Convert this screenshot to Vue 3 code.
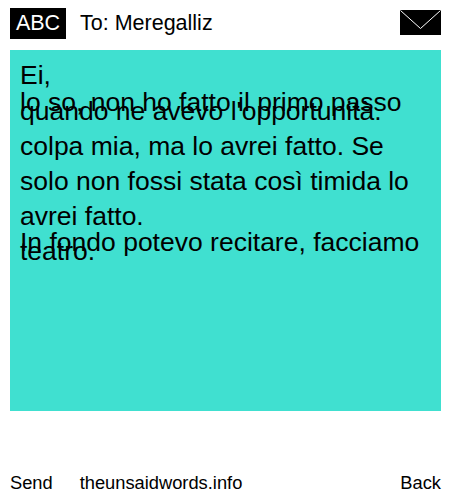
<script setup>
const recipient = 'Meregalliz'
</script>

<template>
  <div class="screen">
    <header class="top">
      <span class="mode">ABC</span>
      <span class="to">To: {{ recipient }}</span>
      <svg class="envelope" width="41" height="25" viewBox="0 0 41 25">
        <rect width="41" height="25" fill="#000" />
        <path d="M0.5 0.5L20.5 18.5L40.5 0.5" fill="none" stroke="#fff" stroke-width="1" />
      </svg>
    </header>

    <main class="message">
      <p class="greeting">Ei,</p>
      <p class="lead">lo so, non ho fatto il primo passo</p>
      <p class="body">quando ne avevo l'opportunità. colpa mia, ma lo avrei fatto. Se solo non fossi stata così timida lo avrei fatto.</p>
      <p class="lead second">In fondo potevo recitare, facciamo</p>
      <p class="body">teatro.</p>
    </main>

    <footer class="bottom">
      <span class="send">Send</span>
      <span class="site">theunsaidwords.info</span>
      <span>Back</span>
    </footer>
  </div>
</template>

<style scoped>
.screen {
  width: 450px;
  height: 500px;
  display: flex;
  flex-direction: column;
  font-family: "Liberation Sans", Arial, sans-serif;
  color: #000;
  background: #fff;
  overflow: hidden;
}

.top {
  flex: none;
  display: flex;
  align-items: center;
  height: 31px;
  margin: 8px 9px 11px 10px;
  font-size: 21.5px;
}

.mode {
  width: 56px;
  height: 31px;
  line-height: 31px;
  text-align: center;
  background: #000;
  color: #fff;
}

.to {
  margin-left: 14px;
}

.envelope {
  margin-left: auto;
  margin-bottom: 2px;
}

.message {
  flex: none;
  box-sizing: border-box;
  width: 431px;
  height: 361px;
  margin-left: 10px;
  padding: 10px;
  background: #40e0d0;
  font-size: 26.5px;
}

.message p {
  margin: 0;
}

.greeting {
  line-height: 30px;
}

.lead {
  line-height: 30px;
  margin-top: -3px !important;
}

.body {
  line-height: 35px;
  margin-top: -23px !important;
}

.second {
  margin-top: -7px !important;
}

.bottom {
  flex: none;
  display: flex;
  margin: 60px 9px 0 10px;
  font-size: 18.3px;
  line-height: 24px;
}

.site {
  margin-left: 27px;
}

.bottom span:last-child {
  margin-left: auto;
}
</style>
